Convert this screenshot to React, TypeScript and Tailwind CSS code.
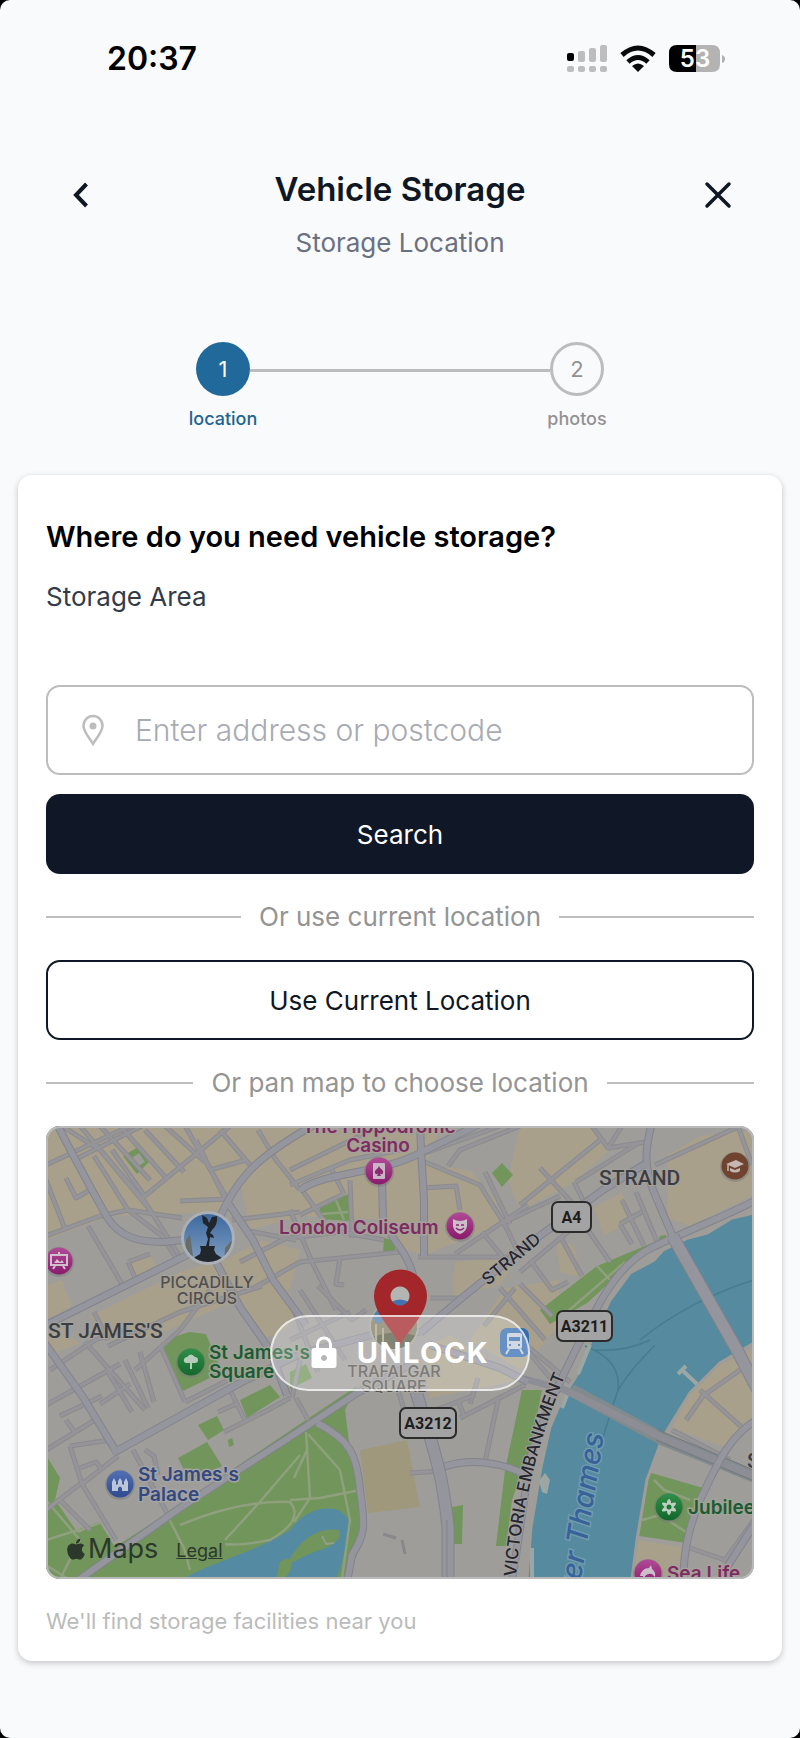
import type { ReactNode } from "react";
import { FaApple } from "react-icons/fa";

const beigeBlocks = [
  "M46 1126 H300 L262 1158 L222 1212 L110 1216 L46 1240Z",
  "M62 1150 L92 1200 L60 1222 L46 1190Z",
  "M240 1180 L300 1130 H440 L425 1165 L470 1170 L495 1200 L500 1225 L425 1255 L405 1250 L385 1220 L300 1216 L250 1230Z",
  "M90 1316 L180 1272 L218 1260 L236 1300 L150 1338 L110 1340Z",
  "M130 1262 L150 1254 L158 1270 L138 1280Z",
  "M220 1262 L262 1240 L300 1250 L290 1290 L240 1300Z",
  "M46 1286 L62 1280 L72 1306 L46 1320Z",
  "M520 1126 H590 L610 1150 L570 1185 L520 1210 L508 1180Z",
  "M455 1262 L520 1256 L500 1285 L452 1296Z",
  "M594 1208 L622 1192 L634 1220 L604 1236Z",
  "M556 1238 L574 1246 L582 1278 L560 1272Z",
  "M668 1155 L700 1136 L754 1130 V1195 L690 1226 L668 1218Z",
  "M690 1393 L720 1365 L754 1348 V1424 L728 1448 L672 1428Z",
  "M638 1540 L690 1548 L684 1579 H632Z",
  "M505 1288 L560 1280 L556 1330 L520 1370 L470 1340Z",
  "M420 1350 L450 1335 L520 1380 L430 1398Z",
  "M240 1300 L262 1340 L285 1330 L300 1310 L280 1290Z",
  "M46 1340 L60 1326 L80 1344 L56 1352Z",
];

const parks = [
  "M46 1455 L60 1478 L55 1500 L78 1533 L100 1523 L115 1547 L163 1516 L300 1424 L357 1386 L345 1410 L349 1442 L358 1460 L362 1540 L348 1579 H46Z",
  "M161 1348 Q166 1338 190 1332 L206 1334 L222 1372 L183 1391Z",
  "M240 1400 L270 1385 L280 1397 L247 1418Z",
  "M198 1425 L217 1416 L224 1430 L208 1440Z",
  "M178 1458 L207 1442 L222 1466 L205 1474 L190 1482Z",
  "M540 1310 L597 1266 L652 1243 L654 1248 L620 1273 L587 1303 L550 1324Z",
  "M522 1390 H542 L530 1450 L512 1500 L506 1546 H496 L505 1470Z",
  "M452 1507 L463 1505 L462 1544 L453 1544Z",
  "M648 1472 L703 1488 L687 1543 L639 1536Z",
  "M123 1156 L138 1147 L150 1161 L137 1174Z",
  "M320 1208 L348 1194 L350 1221 L320 1219Z",
  "M492 1173 L502 1163 L513 1175 L502 1187Z",
  "M384 1238 L393 1240 L396 1252 L383 1254Z",
  "M290 1372 L306 1364 L312 1378 L290 1389Z",
  "M660 1236 L666 1235 L666 1240 L658 1242Z",
  "M228 1440 L232 1438 L234 1445 L229 1447Z",
];

const minorRoads = [
  "M62 1126 L100 1150 L150 1210", "M80 1126 L145 1202 L182 1260", "M100 1126 L150 1180",
  "M120 1126 L168 1180", "M145 1130 L184 1172", "M165 1126 L205 1162",
  "M185 1126 L228 1200", "M46 1165 L130 1126", "M74 1160 L142 1126", "M140 1200 L230 1126",
  "M46 1180 L65 1229", "M46 1236 L100 1216 L128 1210 L182 1218", "M66 1178 L76 1198 L90 1190",
  "M94 1156 L128 1210", "M112 1150 L146 1198", "M180 1201 L228 1199", "M128 1210 L162 1236",
  "M88 1226 L122 1284", "M162 1236 L176 1258", "M128 1262 L150 1254 M128 1262 L136 1280",
  "M94 1312 L108 1340", "M108 1346 L180 1312 L262 1286", "M135 1370 L180 1330", "M180 1330 L210 1290",
  "M232 1220 L300 1212", "M244 1230 L296 1240", "M240 1262 L290 1236", "M250 1290 L300 1262",
  "M258 1130 L276 1160 L300 1190", "M196 1140 L228 1205", "M210 1170 L246 1160", "M220 1130 L250 1165",
  "M290 1185 L350 1160 L400 1150", "M290 1170 L380 1126", "M302 1190 L325 1222", "M330 1166 L344 1194",
  "M344 1194 L300 1215", "M350 1180 L352 1238", "M290 1238 L340 1232 L384 1240", "M300 1262 L340 1258 L400 1252",
  "M290 1210 L312 1262 L336 1310", "M340 1258 L336 1284 L344 1285", "M420 1160 L480 1185 L505 1225",
  "M422 1188 L456 1186 L460 1210", "M455 1254 L528 1205", "M418 1257 H515", "M482 1232 L502 1256",
  "M505 1225 L520 1256", "M422 1154 L500 1126", "M448 1166 L460 1150 L520 1126", "M485 1172 L510 1224",
  "M520 1205 L600 1140", "M505 1222 L560 1196", "M540 1168 L574 1205", "M576 1182 L640 1142",
  "M574 1182 L585 1204", "M592 1126 L608 1148 L646 1142", "M608 1148 L622 1126", "M655 1165 L740 1126",
  "M738 1126 L752 1165", "M636 1192 L658 1244", "M622 1200 L644 1246", "M620 1224 L642 1212",
  "M620 1224 L632 1244", "M588 1230 L610 1262", "M520 1272 L582 1220", "M530 1260 L552 1290 L568 1282",
  "M560 1236 L582 1276", "M520 1284 L552 1316", "M500 1288 L545 1340", "M484 1326 L515 1288",
  "M430 1298 H460", "M300 1290 L345 1360", "M290 1300 L318 1372", "M318 1286 L352 1320 L366 1310",
  "M290 1340 L350 1312", "M50 1370 L95 1340 L125 1330", "M85 1342 L145 1410", "M108 1372 L132 1412",
  "M46 1405 L120 1364", "M60 1416 L102 1396", "M46 1450 L95 1420", "M66 1420 L76 1434",
  "M100 1404 L130 1384", "M125 1360 L148 1408", "M140 1352 L154 1402", "M160 1345 L185 1402",
  "M185 1402 L248 1370", "M133 1450 L168 1515", "M70 1446 L82 1484 L116 1540", "M70 1446 L110 1440",
  "M82 1484 L118 1456", "M46 1510 L80 1484", "M60 1500 L90 1530", "M80 1468 L96 1462 L102 1470",
  "M145 1450 L154 1456 L158 1475", "M230 1390 L245 1420", "M218 1412 L236 1404",
  "M224 1432 L268 1410 L290 1398", "M296 1398 L308 1420", "M300 1360 L292 1398",
  "M430 1412 L475 1395", "M458 1400 L464 1416", "M460 1418 L525 1385", "M498 1400 L485 1462",
  "M410 1473 L440 1471", "M478 1378 L470 1404", "M520 1340 L570 1382", "M527 1350 L560 1390",
  "M700 1390 L745 1430", "M703 1396 L686 1420", "M700 1398 L740 1370", "M672 1430 L730 1460",
  "M690 1548 L725 1560 L754 1520", "M398 1390 L404 1410",
];

const parkPaths = [
  "M46 1500 L80 1540 L60 1579", "M180 1525 Q240 1500 290 1502 Q305 1520 270 1540 Q240 1546 225 1544",
  "M225 1540 L258 1504 L300 1455", "M167 1515 L184 1548 L190 1570", "M306 1432 L310 1498 L294 1522",
  "M308 1434 L340 1470 L350 1520 L342 1579", "M290 1500 L320 1498 L360 1490", "M294 1478 L307 1450",
  "M46 1565 L68 1579", "M46 1540 L100 1523", "M597 1266 L615 1285", "M560 1318 L625 1262",
  "M322 1214 L348 1212 M336 1200 L344 1220", "M654 1480 L664 1490 L690 1500", "M642 1520 L660 1515 L692 1536",
];

const majorRoads = [
  "M55 1120 C75 1160 92 1190 107 1217 C120 1238 140 1242 163 1242 L205 1238",
  "M40 1328 L183 1257 L215 1240",
  "M218 1222 C235 1180 255 1160 300 1133 L316 1124",
  "M228 1203 L253 1240 L273 1280 L306 1325",
  "M216 1262 L240 1307 L270 1350 L287 1395",
  "M113 1453 L240 1383 L300 1354 L390 1330 L420 1332",
  "M44 1342 L83 1397 L117 1453",
  "M80 1579 L180 1508 L290 1437 L357 1393 L410 1365",
  "M317 1423 C350 1440 357 1455 360 1490 C366 1530 364 1535 352 1555 L347 1582",
  "M443 1467 C470 1458 500 1462 524 1474",
  "M420 1333 L463 1297 L530 1243 L603 1190 L645 1164",
  "M652 1122 C645 1150 644 1165 653 1190 L673 1237",
  "M382 1180 L383 1220 C390 1240 410 1250 416 1288",
  "M420 1124 L421 1150 L424 1200 V1256",
  "M300 1190 C330 1170 380 1175 422 1152 L480 1124",
  "M760 1198 C735 1212 705 1223 653 1247 C617 1265 600 1300 578 1345 C560 1380 538 1430 530 1460 L512 1582",
  "M756 1420 C725 1440 715 1470 700 1500 C688 1530 684 1550 683 1582",
  "M754 1525 L722 1575",
  "M430 1345 L500 1368 L528 1382",
];

function Roads({ paths, edge, fill, width }: { paths: string[]; edge: string; fill: string; width: number }) {
  return (
    <g fill="none" strokeLinejoin="round">
      {paths.map((d) => <path key={`e${d}`} d={d} stroke={edge} strokeWidth={width + 2} />)}
      {paths.map((d) => <path key={`f${d}`} d={d} stroke={fill} strokeWidth={width} />)}
    </g>
  );
}

function Marker({ x, y, fill, children }: { x: number; y: number; fill: string; children: ReactNode }) {
  return (
    <g transform={`translate(${x} ${y})`}>
      <circle cy="1" r="15" fill="#77757a" opacity="0.45" />
      <circle r="13.5" fill={fill} />
      {children}
    </g>
  );
}

function Shield({ x, y, w, label }: { x: number; y: number; w: number; label: string }) {
  return (
    <g>
      <rect x={x} y={y} width={w} height="30" rx="6" fill="#a3a3a3" stroke="#2b2b2c" strokeWidth="2" />
      <text x={x + w / 2} y={y + 21} textAnchor="middle" fill="#1d1d1f" className="font-[Roboto,sans-serif] text-[16px] font-bold">{label}</text>
    </g>
  );
}

function MapDrawing() {
  return (
    <svg viewBox="46 1126 708 453" preserveAspectRatio="xMidYMid slice" className="block h-full w-full" role="img" aria-label="Map of central London">
      <defs>
        <linearGradient id="pink" x1="0" y1="0" x2="0" y2="1"><stop offset="0" stopColor="#b04a96" /><stop offset="1" stopColor="#8a1a6c" /></linearGradient>
        <linearGradient id="green" x1="0" y1="0" x2="0" y2="1"><stop offset="0" stopColor="#2f8f48" /><stop offset="1" stopColor="#13682c" /></linearGradient>
        <linearGradient id="blue" x1="0" y1="0" x2="0" y2="1"><stop offset="0" stopColor="#5270b4" /><stop offset="1" stopColor="#2f4a8e" /></linearGradient>
        <linearGradient id="sky" x1="0" y1="0" x2="0" y2="1"><stop offset="0" stopColor="#3d68a0" /><stop offset="1" stopColor="#7f9fc0" /></linearGradient>
        <path id="embankment" d="M516 1577 C522 1510 536 1440 572 1360" />
        <clipPath id="eros"><circle cx="208" cy="1238" r="24" /></clipPath>
        <clipPath id="square"><circle cx="394" cy="1326" r="23" /></clipPath>
      </defs>
      <rect x="46" y="1126" width="708" height="453" fill="#9e9d9a" />
      {beigeBlocks.map((d) => <path key={d} d={d} fill="#a8a08b" />)}
      <path d="M360 1450 L407 1440 L420 1507 L368 1513Z" fill="#9f987c" />
      {parks.map((d) => <path key={d} d={d} fill="#71955a" />)}
      <path d="M132 1158 L139 1153 L145 1162 L137 1167Z" fill="#9d9c99" />
      <path d="M183 1579 C220 1558 250 1555 290 1530 C305 1510 325 1505 340 1511 C356 1522 350 1534 345 1549 C342 1562 340 1572 336 1579Z" fill="#558ba2" />
      <path d="M288 1562 C304 1534 320 1528 339 1530 C343 1538 334 1546 320 1550 C308 1554 300 1558 294 1562Z M280 1562 C294 1552 296 1568 284 1579 H276Z" fill="#71955a" />
      <path d="M322 1536 L326 1544 L334 1543" fill="none" stroke="#92a184" strokeWidth="2" />
      <g fill="none" stroke="#8fa07e" strokeWidth="2.5">{parkPaths.map((d) => <path key={d} d={d} />)}</g>
      <Roads paths={minorRoads} edge="#8b8a8d" fill="#959499" width={3} />
      <path d="M754 1213 L732 1218 L707 1233 L688 1238 L663 1250 L654 1260 L630 1273 L610 1300 L600 1322 L587 1350 L580 1370 L563 1397 L550 1427 L541 1467 L531 1527 L527 1579 H632 L637 1540 L647 1480 L663 1437 L690 1393 L720 1363 L754 1343Z" fill="#568a9f" stroke="#a09d98" strokeWidth="3" />
      <g fill="none" stroke="#477b91" strokeWidth="1.5"><path d="M754 1280 Q690 1300 640 1340" /><path d="M585 1346 Q622 1360 618 1390 Q608 1420 603 1438" /><path d="M655 1345 Q630 1370 618 1390 M596 1350 Q625 1352 650 1340" /></g>
      <g fill="none" stroke="#9ba7a4" strokeWidth="4"><path d="M678 1374 L686 1366 M682 1370 L697 1384" /><path d="M590 1345 L578 1374 M569 1390 L562 1408" /><path d="M532 1548 V1579" /></g>
      <path d="M539 1481 L545 1473 L550 1480 L547 1494 L542 1492Z" fill="#9ba7a4" />
      <path d="M575 1385 L663 1432 L754 1470 V1483 L660 1445 L565 1394Z" fill="#828a8e" />
      <path d="M525 1379 L565 1390 L663 1438 L754 1476" fill="none" stroke="#8d8e95" strokeWidth="7" />
      <path d="M658 1430 L754 1470 M656 1440 L754 1481" stroke="#75787d" strokeWidth="1" />
      <Roads paths={majorRoads} edge="#83838d" fill="#95959d" width={6} />
      <Roads paths={["M413 1382 L430 1437 C440 1470 444 1490 448 1527 V1582", "M673 1237 L737 1350 L760 1394"]} edge="#83838d" fill="#95959d" width={11} />
      <path d="M447 1520 V1579" stroke="#83838d" strokeWidth="1" />
      <path d="M383 1534 L396 1538 M402 1540 L405 1554" stroke="#88878a" strokeWidth="3" />

      <g fill="#7e2c5f" stroke="#a5a09a" strokeWidth="3" paintOrder="stroke" className="text-[19px] font-semibold">
        <text x="379" y="1133" textAnchor="middle">The Hippodrome</text>
        <text x="378" y="1152" textAnchor="middle">Casino</text>
        <text x="279" y="1234">London Coliseum</text>
        <text x="667" y="1580">Sea Life</text>
      </g>
      <g fill="#1c5a35" stroke="#9fa393" strokeWidth="3" paintOrder="stroke" className="text-[19px] font-semibold">
        <text x="209" y="1359">St James's</text><text x="209" y="1378">Square</text><text x="688" y="1514">Jubilee</text>
      </g>
      <g fill="#34477f" stroke="#a3a4a3" strokeWidth="3" paintOrder="stroke" className="text-[19px] font-semibold">
        <text x="138" y="1481">St James's</text><text x="138" y="1501">Palace</text>
      </g>
      <g fill="#514f4c" stroke="#a5a29a" strokeWidth="2" paintOrder="stroke" textAnchor="middle" className="text-[16px] font-medium">
        <text x="207" y="1288">PICCADILLY</text><text x="207" y="1304">CIRCUS</text>
        <text x="394" y="1377">TRAFALGAR</text><text x="394" y="1392">SQUARE</text>
      </g>
      <g fill="#3c3d42" stroke="#a3a19b" strokeWidth="2" paintOrder="stroke" className="font-[Roboto,sans-serif] text-[21px] font-medium">
        <text x="48" y="1338">ST JAMES'S</text><text x="599" y="1185">STRAND</text><text x="747" y="1468">S</text>
      </g>
      <g fill="#25262e" stroke="#a2a19f" strokeWidth="2" paintOrder="stroke" className="text-[17px] font-medium">
        <text transform="translate(488 1286) rotate(-40)">STRAND</text>
        <text><textPath href="#embankment">VICTORIA EMBANKMENT</textPath></text>
      </g>
      <text transform="translate(604 1434) rotate(-81)" textAnchor="end" fill="#37629a" stroke="#719caf" strokeWidth="3" paintOrder="stroke" className="text-[29px] font-medium italic">River Thames</text>

      <Shield x={552} y={1202} w={39} label="A4" />
      <Shield x={557} y={1311} w={55} label="A3211" />
      <Shield x={400} y={1408} w={56} label="A3212" />

      <Marker x={379} y={1171} fill="url(#pink)">
        <rect x="-6" y="-8" width="12" height="16" rx="1" fill="#c7b6c4" />
        <path d="M0 -5 C1 -2 5 -1 4 2 C3 4 1 3 .6 2 L2 5 H-2 L-.6 2 C-1 3 -3 4 -4 2 C-5 -1 -1 -2 0 -5Z" fill="#8a2a70" />
      </Marker>
      <Marker x={460} y={1226} fill="url(#pink)">
        <path d="M-7 -7 Q0 -3 7 -7 V0 Q6 6 0 8 Q-6 6 -7 0Z" fill="#cdbfca" />
        <path d="M-4 -1 L-1 -1 M1 -1 H4 M-4 2 Q0 6 4 2" fill="none" stroke="#8a2a70" strokeWidth="1.5" />
      </Marker>
      <Marker x={59} y={1261} fill="url(#pink)">
        <path d="M-8 -6 H8 V4 H-8Z M0 -6 V-9 M-4 5 L-6 8 M4 5 L6 8" fill="none" stroke="#d0c0cc" strokeWidth="2" />
        <path d="M-5 2 L-2 -2 L1 1 L3 -1 L5 2Z" fill="#d0c0cc" />
      </Marker>
      <Marker x={735} y={1166} fill="#6f4330">
        <path d="M-9 -2 L1 -6 L9 -2 L0 2Z M-5 2 L0 4 L5 2 V5 Q0 8 -5 5Z" fill="#c5b8b0" /><path d="M-7 -1 V5" stroke="#c5b8b0" strokeWidth="1.5" />
      </Marker>
      <Marker x={191} y={1362} fill="url(#green)">
        <path d="M-1 1 H-4 Q-8 1 -7 -3 Q-6 -5 -4 -5 Q0 -10 4 -5 Q7 -5 7 -2 Q7 1 4 1 H1 V7 H-1Z" fill="#b5ccba" />
      </Marker>
      <Marker x={120} y={1484} fill="url(#blue)">
        <path d="M-8 7 V-2 L-6 -6 L-4 -2 V1 L-2 0 V-3 L0 -6 L2 -3 V0 L4 1 V-2 L6 -6 L8 -2 V7 H2 V4 Q0 1 -2 4 V7Z" fill="#bdc5d8" />
      </Marker>
      <Marker x={669} y={1507} fill="url(#green)">
        <g fill="#bdd0c1"><ellipse rx="2.5" ry="8" /><ellipse rx="2.5" ry="8" transform="rotate(60)" /><ellipse rx="2.5" ry="8" transform="rotate(120)" /></g><circle r="2.5" fill="#1c7435" />
      </Marker>
      <Marker x={648} y={1573} fill="url(#pink)">
        <path d="M-8 3 Q-6 -5 1 -5 L3 -8 L4 -4 Q8 -1 7 4 L4 1 Q0 0 -3 3 L-4 7 L-5 3Z" fill="#cdbfca" />
      </Marker>

      <circle cx="208" cy="1238" r="27" fill="#abb0b7" />
      <g clipPath="url(#eros)">
        <rect x="184" y="1214" width="48" height="48" fill="url(#sky)" />
        <path d="M186 1240 L190 1234 L194 1264 H184Z M225 1248 L232 1240 V1262 H224Z" fill="#696d69" />
        <path d="M190 1264 L195 1257 L200 1254 L201 1250 L200 1246 H215 L214 1250 L216 1254 L222 1258 L226 1264Z" fill="#20262b" />
        <path d="M206 1246 L208 1239 L206 1233 L208 1227 L203 1223 L202 1215 L207 1218 L209 1223 L212 1217 L217 1216 Q218 1225 212 1230 L210 1233 L213 1235 L214 1238 L210 1237 L209 1246Z" fill="#20262b" />
      </g>
      <circle cx="394" cy="1326" r="25" fill="#a7a79b" />
      <g clipPath="url(#square)">
        <rect x="370" y="1300" width="50" height="50" fill="#4e7fae" />
        <path d="M370 1324 L374 1318 L378 1325 L384 1320 L395 1326 L420 1318 V1350 H370Z" fill="#827b62" />
        <path d="M370 1338 Q394 1328 420 1337 V1350 H370Z" fill="#565b43" />
        <path d="M376 1324 V1342 M383 1328 V1342" stroke="#aaa383" strokeWidth="2" />
      </g>
      <rect x="500" y="1328" width="29" height="29" rx="7" fill="#356bb0" />
      <path d="M507 1335 Q507 1333 509 1333 H520 Q522 1333 522 1335 V1347 Q522 1349 520 1349 H509 Q507 1349 507 1347Z" fill="#c4cdd9" />
      <path d="M509 1337 H520 V1341 H509Z M509 1344 H511 V1346 H509Z M518 1344 H520 V1346 H518Z" fill="#356bb0" />
      <path d="M509 1349 L506 1354 M520 1349 L523 1354" stroke="#c4cdd9" strokeWidth="2" />
      <circle cx="400" cy="1296" r="10" fill="#b4b4b2" />
      <path d="M391 1302 Q400 1297 409 1302 Q406 1306 400 1306 Q394 1306 391 1302Z" fill="#4273ad" />
      <path fillRule="evenodd" d="M400 1345 C392 1329 374 1314 374 1296 A26.5 26.5 0 0 1 427 1296 C427 1314 409 1329 400 1345Z M400 1286.5 a9.5 9.5 0 1 0 .01 0Z" fill="#a3262a" />
    </svg>
  );
}

function StatusIcons() {
  return (
    <svg viewBox="0 0 160 30" className="h-[30px] w-[160px]" aria-label="Signal, Wi-Fi, battery 53%">
      <g fill="#bdbdbf">
        <rect x="11" y="7" width="7" height="11" rx="2" /><rect x="22" y="4" width="7" height="14" rx="2" /><rect x="33" y="1" width="7" height="17" rx="2" />
        <rect x="0" y="22" width="7" height="6" rx="2" /><rect x="11" y="22" width="7" height="6" rx="2" /><rect x="22" y="22" width="7" height="6" rx="2" /><rect x="33" y="22" width="7" height="6" rx="2" />
      </g>
      <rect x="0" y="9" width="7" height="8" rx="2" fill="#000" />
      <g fill="none" stroke="#0a0a0a" strokeWidth="5"><path d="M55 11 Q71 -3 87 11" /><path d="M61 18 Q71 9 81 18" /></g>
      <path d="M65 22 Q71 17 77 22 L71 28Z" fill="#0a0a0a" />
      <path d="M110 1 H129 V28 H110 Q102 28 102 20 V9 Q102 1 110 1Z" fill="#000" />
      <path d="M129 1 H145 Q153 1 153 9 V20 Q153 28 145 28 H129Z" fill="#b3b3b4" />
      <path d="M155 11 Q158 12 158 15 Q158 18 155 19Z" fill="#b3b3b4" />
      <text x="128" y="23" textAnchor="middle" fill="#fff" className="text-[24px] font-semibold">53</text>
    </svg>
  );
}

function Divider({ children }: { children: ReactNode }) {
  return (
    <div className="my-[25px] flex items-center gap-[18px] text-[26px] leading-9 text-[#949494]">
      <span className="h-[2px] flex-1 bg-[#bfbfbf]" />
      {children}
      <span className="h-[2px] flex-1 bg-[#bfbfbf]" />
    </div>
  );
}

export default function App() {
  return (
    <div className="min-h-screen bg-black font-[Inter,sans-serif]">
      <div className="min-h-screen rounded-[10px] bg-[#f9fafc] pb-[77px]">
        <div className="flex h-[118px] items-center justify-between pr-[73px] pl-[107px]">
          <span className="text-[32px] font-semibold text-black">20:37</span>
          <StatusIcons />
        </div>

        <header className="flex items-start justify-between px-[68px] pt-[51px]">
          <button aria-label="Back" className="mt-[10px] flex h-8 w-8 items-center">
            <svg viewBox="0 0 28 32" className="h-8 w-7" fill="none" stroke="#0f1624" strokeWidth="4"><path d="M18.5 5 L8 16 L18.5 27" strokeLinejoin="miter" /></svg>
          </button>
          <div className="text-center">
            <h1 className="text-[33px] leading-10 font-semibold text-[#0f1624]">Vehicle Storage</h1>
            <p className="mt-4 text-[26px] leading-9 text-[#6b7080]">Storage Location</p>
          </div>
          <button aria-label="Close" className="mt-[10px] flex h-8 w-8 items-center justify-end">
            <svg viewBox="0 0 28 32" className="h-8 w-7" fill="none" stroke="#0f1624" strokeWidth="3.5" strokeLinecap="round"><path d="M3 5 L25 27 M25 5 L3 27" /></svg>
          </button>
        </header>

        <ol className="mt-[81px] flex items-start px-[24.5%]">
          <li className="flex w-[54px] flex-col items-center gap-[11px]">
            <span className="flex h-[54px] w-[54px] shrink-0 items-center justify-center rounded-full bg-[#22699b] text-[22px] text-white">1</span>
            <span className="text-[18px] leading-6 font-medium text-[#22648f]">location</span>
          </li>
          <li aria-hidden="true" className="mt-[27px] h-[3px] flex-1 bg-[#bcbcbe]" />
          <li className="flex w-[54px] flex-col items-center gap-[11px]">
            <span className="flex h-[54px] w-[54px] shrink-0 items-center justify-center rounded-full border-3 border-[#bcbcbe] text-[22px] text-[#929292]">2</span>
            <span className="text-[18px] leading-6 font-medium text-[#929292]">photos</span>
          </li>
        </ol>

        <main className="mx-[18px] mt-11 rounded-[14px] bg-white px-7 pt-11 pb-6 shadow-[0_2px_6px_rgba(0,0,0,0.22)]">
          <h2 className="text-[29px] leading-9 font-semibold text-black">Where do you need vehicle storage?</h2>
          <label htmlFor="address" className="mt-6 block text-[26px] leading-9 text-[#333b48]">Storage Area</label>

          <div className="mt-[70px] flex h-[90px] items-center gap-[29px] rounded-[14px] border-2 border-[#bdbdbd] pl-8">
            <svg viewBox="0 0 26 32" className="h-8 w-[26px] shrink-0" fill="none" stroke="#bdbdbd" strokeWidth="2.5"><path d="M13 30 C9 23 3.500 18 3.500 11.500 A9.500 9.500 0 0 1 22.500 11.500 C22.500 18 17 23 13 30Z" /><circle cx="13" cy="12" r="3.5" fill="#bdbdbd" stroke="none" /></svg>
            <input id="address" type="text" placeholder="Enter address or postcode" className="h-full min-w-0 flex-1 bg-transparent text-[30px] font-light outline-none placeholder:text-[#a8abb2]" />
          </div>
          <button className="mt-[19px] h-20 w-full rounded-[14px] bg-[#101726] text-[26px] text-white">Search</button>
          <Divider>Or use current location</Divider>
          <button className="h-20 w-full rounded-[14px] border-2 border-[#101726] text-[26px] text-[#0f1624]">Use Current Location</button>
          <Divider>Or pan map to choose location</Divider>

          <div className="relative aspect-[708/453] overflow-hidden rounded-[14px] text-black">
            <MapDrawing />
            <div className="absolute inset-0 rounded-[14px] border-2 border-[#b9b9b9]" />
            <button className="absolute top-1/2 left-1/2 flex h-[76px] w-[260px] -translate-x-1/2 -translate-y-1/2 items-center justify-center gap-5 rounded-full border-2 border-white/70 bg-white/25 text-[29px] font-bold tracking-wider text-white">
              <svg viewBox="0 0 26 34" className="h-[34px] w-[26px]"><path d="M6.500 14 V8.500 A6.500 6.500 0 0 1 19.500 8.500 V14" fill="none" stroke="#fff" strokeWidth="3" /><path fillRule="evenodd" d="M3 12 H23 Q25.500 12 25.500 15 V29 Q25.500 32 23 32 H3 Q.5 32 .5 29 V15 Q.5 12 3 12Z M13 19 a3 3 0 1 0 .01 0Z" fill="#fff" /></svg>
              UNLOCK
            </button>
            <div className="absolute bottom-3 left-[18px] flex items-center text-[#2b382b]">
              <FaApple size={24} aria-hidden="true" />
              <span className="text-[27px] leading-9">Maps</span>
              <a href="#legal" className="ml-[18px] pt-1 text-[18px] leading-6 underline">Legal</a>
            </div>
          </div>

          <p className="mt-[26px] text-[22px] leading-8 text-[#bbbbbb]">We'll find storage facilities near you</p>
        </main>
      </div>
    </div>
  );
}
